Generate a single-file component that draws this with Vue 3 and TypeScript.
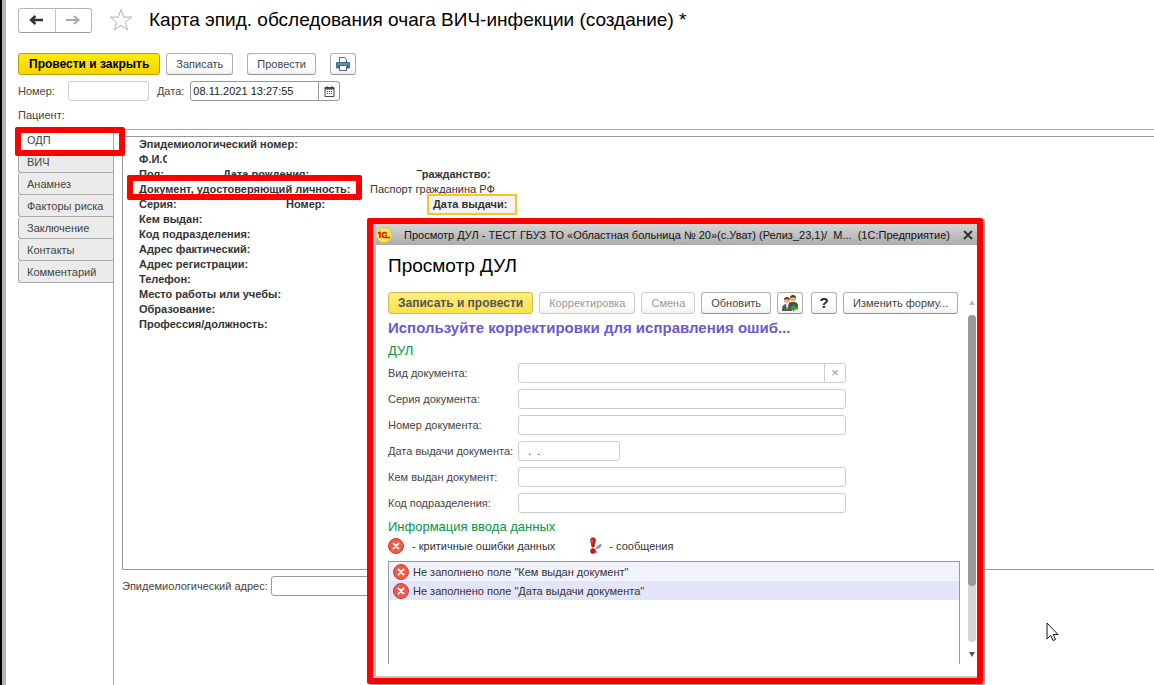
<script setup lang="ts">
import { ref } from 'vue'

const tabs = ['ОДП', 'ВИЧ', 'Анамнез', 'Факторы риска', 'Заключение', 'Контакты', 'Комментарий']
const activeTab = ref('ОДП')

const number = ref('')
const date = ref('08.11.2021 13:27:55')
const address = ref('')

const tail = [
  'Кем выдан:',
  'Код подразделения:',
  'Адрес фактический:',
  'Адрес регистрации:',
  'Телефон:',
  'Место работы или учебы:',
  'Образование:',
  'Профессия/должность:',
]

interface Field {
  id: string
  label: string
  value: string
  kind: 'clear' | 'plain' | 'date'
}
const fields = ref<Field[]>([
  { id: 'kind', label: 'Вид документа:', value: '', kind: 'clear' },
  { id: 'series', label: 'Серия документа:', value: '', kind: 'plain' },
  { id: 'docnum', label: 'Номер документа:', value: '', kind: 'plain' },
  { id: 'issued', label: 'Дата выдачи документа:', value: '  .  .', kind: 'date' },
  { id: 'issuer', label: 'Кем выдан документ:', value: '', kind: 'plain' },
  { id: 'dept', label: 'Код подразделения:', value: '', kind: 'plain' },
])

const errors = ['Не заполнено поле "Кем выдан документ"', 'Не заполнено поле "Дата выдачи документа"']
</script>

<template>
  <div class="app">
    <main class="page">
      <header class="head">
        <div class="nav">
          <button type="button" aria-label="Назад">
            <svg width="16" height="12" viewBox="0 0 16 12"><path d="M2 6h12M6.500 2L2 6l4.500 4" fill="none" stroke="#333" stroke-width="2.400" /></svg>
          </button>
          <button type="button" aria-label="Вперед">
            <svg width="16" height="12" viewBox="0 0 16 12"><path d="M1 6h12M9 2l4.500 4L9 10" fill="none" stroke="#aaa" stroke-width="2" /></svg>
          </button>
        </div>
        <svg class="star" width="24" height="24" viewBox="0 0 24 24"><path d="M12 1.500l2.700 7.600h8L16.300 14l2.400 8-6.700-4.800L5.300 22l2.400-8L1.300 9.100h8z" fill="#fff" stroke="#a9b3bd" /></svg>
        <h1>Карта эпид. обследования очага ВИЧ-инфекции (создание) *</h1>
      </header>

      <div class="toolbar">
        <button type="button" class="btn primary">Провести и закрыть</button>
        <button type="button" class="btn">Записать</button>
        <button type="button" class="btn gap">Провести</button>
        <button type="button" class="btn icon gap" aria-label="Печать">
          <svg width="16" height="16" viewBox="0 0 16 16">
            <path d="M4.500 6V1.500h5l2 2V6" fill="#fff" stroke="#446b87" />
            <rect x="1" y="6" width="14" height="6.500" rx="1" fill="#3f6f91" />
            <rect x="2.500" y="7.500" width="11" height="1" fill="#86a9c1" />
            <rect x="4.500" y="9.500" width="7" height="5" fill="#fff" stroke="#446b87" />
          </svg>
        </button>
      </div>

      <div class="meta">
        <label for="number">Номер:</label>
        <input id="number" v-model="number" class="box num" type="text" />
        <label for="date">Дата:</label>
        <span class="datebox">
          <input id="date" v-model="date" type="text" />
          <button type="button" aria-label="Выбрать дату">
            <svg width="11" height="11" viewBox="0 0 11 11">
              <path d="M1 1.500h9v9H1z" fill="#fff" stroke="#444" />
              <path d="M1 2.500h9" stroke="#444" stroke-width="2" />
              <path d="M3 0v2M8 0v2" stroke="#444" />
              <path d="M2 5.500h7M2 7.500h7" stroke="#444" stroke-dasharray="1 1" stroke-dashoffset="1" />
            </svg>
          </button>
        </span>
      </div>
      <div class="patient">Пациент:</div>

      <div class="body">
        <nav class="tabs">
          <button v-for="t in tabs" :key="t" type="button" :class="{ active: t === activeTab }" @click="activeTab = t">{{ t }}</button>
          <span class="mark mark-tab"></span>
        </nav>
        <section class="content">
          <div class="sheet">
            <div class="line"><b>Эпидемиологический номер:</b></div>
            <div class="line"><b class="hidden-end">Ф.И.О</b></div>
            <div class="line cols"><b>Пол:</b><b class="birth">Дата рождения:</b><b class="citizen">Гражданство:</b></div>
            <div class="line cols"><b>Документ, удостоверяющий личность:</b><span class="passport">Паспорт гражданина РФ</span></div>
            <div class="line cols"><b>Серия:</b><b class="docno">Номер:</b><b class="issue">Дата выдачи:</b></div>
            <div v-for="t in tail" :key="t" class="line"><b>{{ t }}</b></div>
            <span class="mark mark-doc"></span>
          </div>
          <div class="address">
            <label for="address">Эпидемиологический адрес:</label>
            <input id="address" v-model="address" class="box" type="text" />
          </div>
        </section>
      </div>
    </main>

    <div class="dialog" role="dialog" aria-labelledby="dlg-title">
      <div class="win">
        <div class="titlebar">
          <svg width="16" height="16" viewBox="0 0 16 16">
            <circle cx="8" cy="8" r="7.500" fill="#fde750" stroke="#ecc93c" />
            <path d="M2 6.500l2-1.200V11" fill="none" stroke="#d8161b" stroke-width="1.600" />
            <path d="M10.800 6.800C10 4.800 6.300 5 6.300 8c0 1.800 1.200 2.500 2.500 2.500H14M11 8.500H9" fill="none" stroke="#d8161b" stroke-width="1.600" />
          </svg>
          <span class="caption">Просмотр ДУЛ - ТЕСТ ГБУЗ ТО «Областная больница № 20»(с.Уват) (Релиз_23,1)/&nbsp; М...&nbsp; (1С:Предприятие)</span>
          <button type="button" aria-label="Закрыть">
            <svg width="10" height="10" viewBox="0 0 10 10"><path d="M1 1l8 8M9 1L1 9" stroke="#333" stroke-width="2" /></svg>
          </button>
        </div>
        <div class="client">
          <h2 id="dlg-title">Просмотр ДУЛ</h2>
          <div class="cmds">
            <button type="button" class="btn primary pale">Записать и провести</button>
            <button type="button" class="btn" disabled>Корректировка</button>
            <button type="button" class="btn" disabled>Смена</button>
            <button type="button" class="btn">Обновить</button>
            <button type="button" class="btn icon" aria-label="Пользователи">
              <svg width="18" height="18" viewBox="0 0 18 18">
                <path d="M7 14c0-5 1-6 5-6s5 1 5 5v1z" fill="#4b4b4b" />
                <circle cx="12" cy="4.500" r="3" fill="#e2aa7c" /><path d="M9 4c0-4 6-4 6 0l-3-1z" fill="#4a2c1a" />
                <path d="M1 17c0-5 1-7 5-7s5 2 5 7z" fill="#555" /><path d="M5 10l1 6 1.500-6z" fill="#fff" />
                <circle cx="6" cy="6.500" r="3" fill="#e8b68a" /><path d="M3 6c0-4 6-4 6 0L6 5z" fill="#5a3621" />
                <path d="M9 14l4.500-4v2.500H17v3h-3.500V18z" fill="#35a51d" />
              </svg>
            </button>
            <button type="button" class="btn icon help">?</button>
            <button type="button" class="btn">Изменить форму...</button>
          </div>
          <p class="notice">Используйте корректировки для исправления ошиб...</p>
          <h3>ДУЛ</h3>
          <div class="form">
            <div v-for="f in fields" :key="f.id" class="row">
              <label :for="f.id">{{ f.label }}</label>
              <span class="field" :class="f.kind">
                <input :id="f.id" v-model="f.value" type="text" />
                <button v-if="f.kind === 'clear'" type="button" aria-label="Очистить">×</button>
              </span>
            </div>
          </div>
          <h3>Информация ввода данных</h3>
          <div class="legend">
            <svg width="16" height="16" viewBox="0 0 16 16"><circle cx="8" cy="8" r="7.500" fill="#f25a48" stroke="#b8453c" /><path d="M5.500 5.500l5 5M10.500 5.500l-5 5" stroke="#fff" stroke-width="1.800" stroke-linecap="round" /></svg>
            <span class="crit">- критичные ошибки данных</span>
            <svg width="14" height="18" viewBox="0 0 14 18"><path d="M6 12l3-4 3-1 1 1-2 3-3 1z" fill="#999" /><path d="M7 14l2 1-2 2z" fill="#999" /><path d="M1.500 3c0-3 5-3 5 0L5 10H3z" fill="#d3170f" stroke="#8d0d08" stroke-width=".6" /><circle cx="4" cy="14" r="2.500" fill="#d3170f" stroke="#8d0d08" stroke-width=".6" /><path d="M3 2.500v3" stroke="#ff9a8d" /></svg>
            <span class="msg">- сообщения</span>
          </div>
          <ul class="errors">
            <li v-for="e in errors" :key="e">
              <svg width="16" height="16" viewBox="0 0 16 16"><circle cx="8" cy="8" r="7.500" fill="#f25a48" stroke="#b8453c" /><path d="M5.500 5.500l5 5M10.500 5.500l-5 5" stroke="#fff" stroke-width="1.800" stroke-linecap="round" /></svg>
              {{ e }}
            </li>
          </ul>
          <div class="scroll">
            <i class="up"></i>
            <div class="track"><div class="thumb"></div></div>
            <i class="down"></i>
          </div>
        </div>
      </div>
    </div>

    <svg class="cursor" width="13" height="20" viewBox="0 0 13 20"><path d="M1 1v16l3.700-3.500L7 18.500l2.500-1L7.300 12.500H12z" fill="#fff" stroke="#112" /></svg>
  </div>
</template>

<style>
html,
body {
  margin: 0;
  background: #fff;
}
</style>

<style scoped>
.app {
  position: relative;
  box-sizing: border-box;
  min-height: 100vh;
  display: flex;
  overflow: hidden;
  border-left: 2px solid #000;
  font: 11px/14px "Liberation Sans", Arial, sans-serif;
  color: #444;
}
.app * {
  box-sizing: border-box;
}
button,
input {
  font: inherit;
  color: inherit;
  padding: 0;
  margin: 0;
}
svg {
  display: block;
  flex: none;
}
.page {
  flex: 1;
  min-width: 0;
  display: flex;
  flex-direction: column;
  border-left: 4px solid #b4b4b4;
  padding: 7px 0 0 12px;
}
.head {
  display: flex;
  align-items: center;
  height: 26px;
}
.nav {
  display: flex;
  height: 25px;
  width: 74px;
  border: 1px solid #b5b5b5;
  border-bottom-color: #999;
  border-radius: 3px;
}
.nav button {
  flex: 1;
  border: 0;
  background: none;
  display: flex;
  align-items: center;
  justify-content: center;
}
.nav button + button {
  border-left: 1px solid #c4c4c4;
}
.star {
  margin: 0 16px 0 17px;
}
h1,
h2,
h3,
p {
  margin: 0;
  font-weight: 400;
}
h1 {
  font-size: 19px;
  line-height: 26px;
  color: #000;
  white-space: nowrap;
}
.toolbar {
  display: flex;
  gap: 6px;
  margin-top: 20px;
}
.btn {
  height: 22px;
  padding: 0 9px;
  border: 1px solid #b0b0b0;
  border-bottom-color: #909090;
  border-radius: 3px;
  background: linear-gradient(#fff 60%, #f1f1f1);
  white-space: nowrap;
  display: flex;
  align-items: center;
  justify-content: center;
}
.gap {
  margin-left: 8px;
}
.icon {
  width: 26px;
  padding: 0;
}
.primary {
  padding: 0 10px;
  background: linear-gradient(#ffea10, #f4d500);
  border-color: #bd9f00;
  color: #000;
  font-weight: 700;
  font-size: 12px;
}
.meta {
  display: flex;
  align-items: center;
  margin-top: 5px;
  height: 22px;
}
.box {
  height: 20px;
  border: 1px solid #999;
  border-radius: 3px;
  background: #fff;
}
.num {
  width: 81px;
  margin: 0 8px 0 13px;
  border-color: #ccc;
}
.datebox {
  display: flex;
  width: 150px;
  height: 20px;
  margin-left: 6px;
  border: 1px solid #999;
  border-radius: 3px;
  color: #222;
}
.datebox input {
  flex: 1;
  min-width: 0;
  border: 0;
  background: none;
  padding-left: 2px;
}
.datebox button {
  width: 21px;
  border: 0;
  border-left: 1px solid #999;
  background: none;
  display: flex;
  align-items: center;
  justify-content: center;
}
.patient {
  margin-top: 6px;
}
.body {
  flex: 1;
  display: flex;
  margin-top: 7px;
}
.tabs {
  position: relative;
  width: 96px;
  border-right: 1px solid #aaa;
}
.tabs button {
  display: block;
  width: 95px;
  height: 22px;
  padding-left: 8px;
  text-align: left;
  white-space: nowrap;
  border: 1px solid #aaa;
  border-top: 0;
  border-right: 0;
  border-radius: 3px 0 0 3px;
  background: #ebebeb;
}
.tabs button.active {
  background: #fff;
}
.mark {
  position: absolute;
  z-index: 1;
  border: 6px solid #f00;
  border-radius: 2px;
  pointer-events: none;
}
.mark-tab {
  left: -3px;
  top: -2px;
  width: 110px;
  height: 29px;
}
.content {
  flex: 1;
  min-width: 0;
  padding: 6px 0 0 8px;
  border-top: 1px solid #aaa;
}
.sheet {
  position: relative;
  height: 434px;
  border: 1px solid #999;
  border-right: 0;
  padding-left: 16px;
  color: #333;
}
.line {
  height: 15px;
  line-height: 15px;
  white-space: nowrap;
}
.cols {
  display: grid;
  grid-template-columns: 84px 63px 84px 46px 11px 1fr;
  grid-template-rows: 15px;
}
.cols > b:first-child {
  grid-column: 1;
}
.birth {
  grid-column: 2;
}
.docno {
  grid-column: 3;
}
.passport {
  grid-column: 4;
}
.citizen {
  grid-column: 5;
}
.issue {
  grid-column: 6;
  justify-self: start;
  align-self: center;
  height: 21px;
  width: 90px;
  padding-left: 4px;
  line-height: 17px;
  border: 2px solid #f8c42a;
  background: #f2f2f2;
}
/* white eraser strokes laid over personal data */
.hidden-end,
.citizen {
  position: relative;
}
.hidden-end::after,
.citizen::before {
  content: '';
  position: absolute;
  background: #fff;
}
.hidden-end::after {
  left: 28px;
  top: 0;
  width: 60px;
  height: 15px;
}
.citizen::before {
  left: -4px;
  top: 4px;
  width: 8px;
  height: 10px;
}
.mark-doc {
  left: 4px;
  top: 38px;
  width: 235px;
  height: 25px;
}
.address {
  display: flex;
  align-items: center;
  margin-top: 6px;
  gap: 3px;
}
.address .box {
  flex: 1;
  max-width: 500px;
}
.dialog {
  position: absolute;
  z-index: 2;
  left: 365px;
  top: 218px;
  width: 616px;
  border: 6px solid #f00;
  border-radius: 2px;
  box-shadow: 2px 1px 0 #999;
  background: #fff;
}
.win {
  border: solid #bfc1c3;
  border-width: 0 0 2px 3px;
}
.titlebar {
  display: flex;
  align-items: center;
  height: 21px;
  background: linear-gradient(#d6d6d6, #acacae);
  color: #111;
}
.caption {
  flex: 1;
  margin-left: 12px;
  white-space: nowrap;
}
.titlebar button {
  width: 18px;
  border: 0;
  background: none;
  display: flex;
  justify-content: center;
}
.client {
  position: relative;
  padding: 9px 17px 12px 12px;
}
h2 {
  font-size: 19px;
  line-height: 24px;
  color: #000;
}
.cmds {
  display: flex;
  gap: 6px;
  margin-top: 14px;
}
.cmds .btn:disabled {
  color: #999;
  border-color: #ccc;
}
.cmds .pale {
  padding: 0 9px;
  background: linear-gradient(#ffee80, #f8e14c);
  border-color: #d2bd50;
  color: #555;
}
.cmds .help {
  margin-left: 2px;
  font-size: 15px;
  font-weight: 700;
  color: #222;
}
.notice {
  margin-top: 5px;
  font-size: 15px;
  line-height: 18px;
  font-weight: 700;
  color: #6a5acd;
  white-space: nowrap;
}
h3 {
  font-size: 13px;
  line-height: 16px;
  margin-top: 6px;
  color: #009646;
}
.form {
  display: grid;
  gap: 6px;
  margin: 4px 0 6px;
}
.row {
  display: flex;
  align-items: center;
  height: 20px;
}
.row label {
  width: 130px;
  white-space: nowrap;
}
.field {
  display: flex;
  width: 328px;
  height: 20px;
  border: 1px solid #ccc;
  border-radius: 3px;
}
.field.date {
  width: 102px;
}
.field input {
  flex: 1;
  min-width: 0;
  border: 0;
  background: none;
  padding-left: 3px;
}
.field button {
  width: 21px;
  border: 0;
  border-left: 1px solid #ccc;
  background: none;
  color: #999;
  font-size: 13px;
}
.legend {
  display: flex;
  align-items: center;
  height: 22px;
  color: #333;
}
.crit {
  margin: 0 34px 0 8px;
}
.msg {
  margin-left: 6px;
}
.errors {
  list-style: none;
  margin: 4px 0 0;
  padding: 0;
  height: 103px;
  border: 1px solid #999;
  border-bottom: 0;
  color: #333;
}
.errors li {
  display: flex;
  align-items: center;
  gap: 4px;
  height: 19px;
  padding-left: 4px;
  background: #f2f2fd;
}
.errors li + li {
  background: #e4e5f8;
}
.scroll {
  position: absolute;
  top: 55px;
  right: 1px;
  bottom: 19px;
  width: 8px;
  display: flex;
  flex-direction: column;
  align-items: center;
  justify-content: space-between;
}
.track {
  flex: 1;
  width: 8px;
  margin: 10px 0;
  border-radius: 4px;
  background: #d6d6d6;
}
.thumb {
  height: 83%;
  border-radius: 4px;
  background: #999;
}
.up,
.down {
  border: 3px solid transparent;
}
.up {
  border-top: 0;
  border-bottom: 5px solid #bbb;
}
.down {
  border-bottom: 0;
  border-top: 5px solid #555;
}
.cursor {
  position: absolute;
  left: 1044px;
  top: 622px;
}
</style>
